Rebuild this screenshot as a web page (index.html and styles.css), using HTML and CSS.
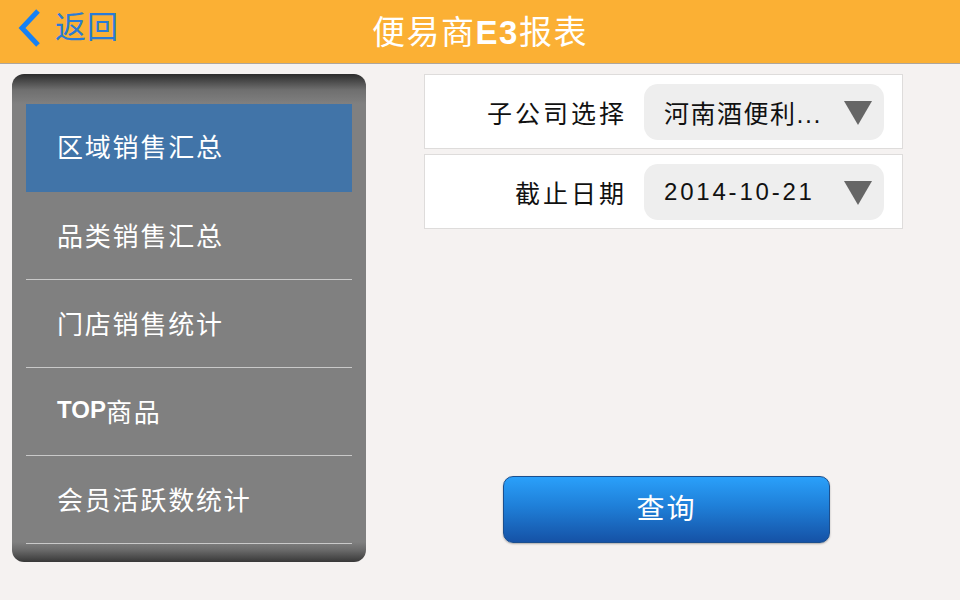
FILE: index.html
```html
<!DOCTYPE html>
<html lang="zh-CN">
<head>
    <meta charset="UTF-8">
    <meta name="viewport" content="width=device-width, initial-scale=1.0">
    <title>便易商E3报表</title>
    <link rel="stylesheet" href="styles.css">
</head>
<body>
    <div id='header'>
        <a href="#" class='back'>
            <svg class='chevron' width="26" height="40" viewBox="0 0 26 40">
                <path d="M22 3 L6 20 L22 37" fill="none" stroke="#1681f4" stroke-width="5" stroke-linecap="butt" stroke-linejoin="miter"/>
            </svg>
            <span>返回</span>
        </a>
        <div class='title'>便易商<b>E3</b>报表</div>
    </div>

    <div id='main'>
        <div class='menu'>
            <div class='item active'>区域销售汇总</div>
            <div class='item'>品类销售汇总</div>
            <div class='item'>门店销售统计</div>
            <div class='item'><b>TOP</b>商品</div>
            <div class='item'>会员活跃数统计</div>
        </div>

        <div class='form'>
            <div class='row'>
                <span class='label'>子公司选择</span>
                <div class='select'>
                    <span class='value'>河南酒便利...</span>
                    <span class='arrow'></span>
                </div>
            </div>
            <div class='row'>
                <span class='label'>截止日期</span>
                <div class='select'>
                    <span class='value date'>2014-10-21</span>
                    <span class='arrow'></span>
                </div>
            </div>
            <a href="#" class='btn'>查询</a>
        </div>
    </div>
</body>
</html>
```

FILE: styles.css
```css
*{
    margin: 0;
    padding: 0;
    box-sizing: border-box;
}
body{
    width: 960px;
    height: 600px;
    overflow: hidden;
    background-color: #f5f2f1;
    font-family: "Liberation Sans", "Noto Sans CJK SC", sans-serif;
}
a{
    text-decoration: none;
}
#header{
    position: relative;
    height: 64px;
    background-color: #fbb034;
    border-bottom: 1px solid #aea69c;
    display: flex;
    align-items: center;
    justify-content: center;
}
.back{
    position: absolute;
    left: 16px;
    top: 8px;
    display: flex;
    align-items: center;
    color: #2a7bd6;
    font-size: 31px;
    letter-spacing: 1px;
}
.back span{
    margin-left: 13px;
    line-height: 40px;
}
.title{
    color: white;
    font-size: 33px;
    letter-spacing: 1.5px;
    margin-left: 0;
    margin-top: -3px;
}
#main{
    display: flex;
    padding-top: 10px;
}
.menu{
    margin-left: 12px;
    width: 354px;
    height: 488px;
    border-radius: 12px;
    padding: 30px 14px 18px 14px;
    background: linear-gradient(#2c2c2c, #6f6f6f 16px, #808080 30px, #808080 calc(100% - 20px), #6a6a6a calc(100% - 12px), #383838);
}
.item{
    height: 88px;
    border-bottom: 1px solid #c9c9c9;
    padding-left: 31px;
    padding-bottom: 3px;
    display: flex;
    align-items: center;
    color: white;
    font-size: 26px;
    letter-spacing: 1.8px;
}
.item.active{
    background-color: #4174a8;
    border-bottom-color: #4174a8;
    padding-bottom: 4px;
}
.item b{
    font-size: 24px;
    letter-spacing: 0;
}
.form{
    margin-left: 58px;
    width: 479px;
    display: flex;
    flex-direction: column;
}
.row{
    height: 75px;
    background-color: white;
    border: 1px solid #dedcdb;
    margin-bottom: 5px;
    display: flex;
    align-items: center;
    justify-content: flex-end;
    padding-right: 18px;
}
.label{
    color: #111;
    font-size: 25px;
    letter-spacing: 3px;
    margin-right: 17px;
}
.select{
    width: 240px;
    height: 56px;
    border-radius: 14px;
    background-color: #eeeeee;
    display: flex;
    align-items: center;
    padding-left: 20px;
}
.value{
    flex: 1;
    color: #111;
    font-size: 25px;
    letter-spacing: 1.5px;
}
.value.date{
    font-size: 24px;
    letter-spacing: 2.8px;
}
.arrow{
    width: 0;
    height: 0;
    border-left: 14px solid transparent;
    border-right: 14px solid transparent;
    border-top: 24px solid #666;
    margin-right: 12px;
    margin-top: 2px;
}
.btn{
    margin-top: 242px;
    margin-left: 79px;
    width: 327px;
    height: 67px;
    border-radius: 10px;
    border: 1px solid #1b4f8e;
    background: linear-gradient(#2aa0fa, #1f7fd8 45%, #1552a6);
    color: white;
    font-size: 28px;
    letter-spacing: 2px;
    padding-bottom: 5px;
    display: flex;
    align-items: center;
    justify-content: center;
    box-shadow: 0 1px 2px rgba(0, 0, 0, 0.3);
}
```
